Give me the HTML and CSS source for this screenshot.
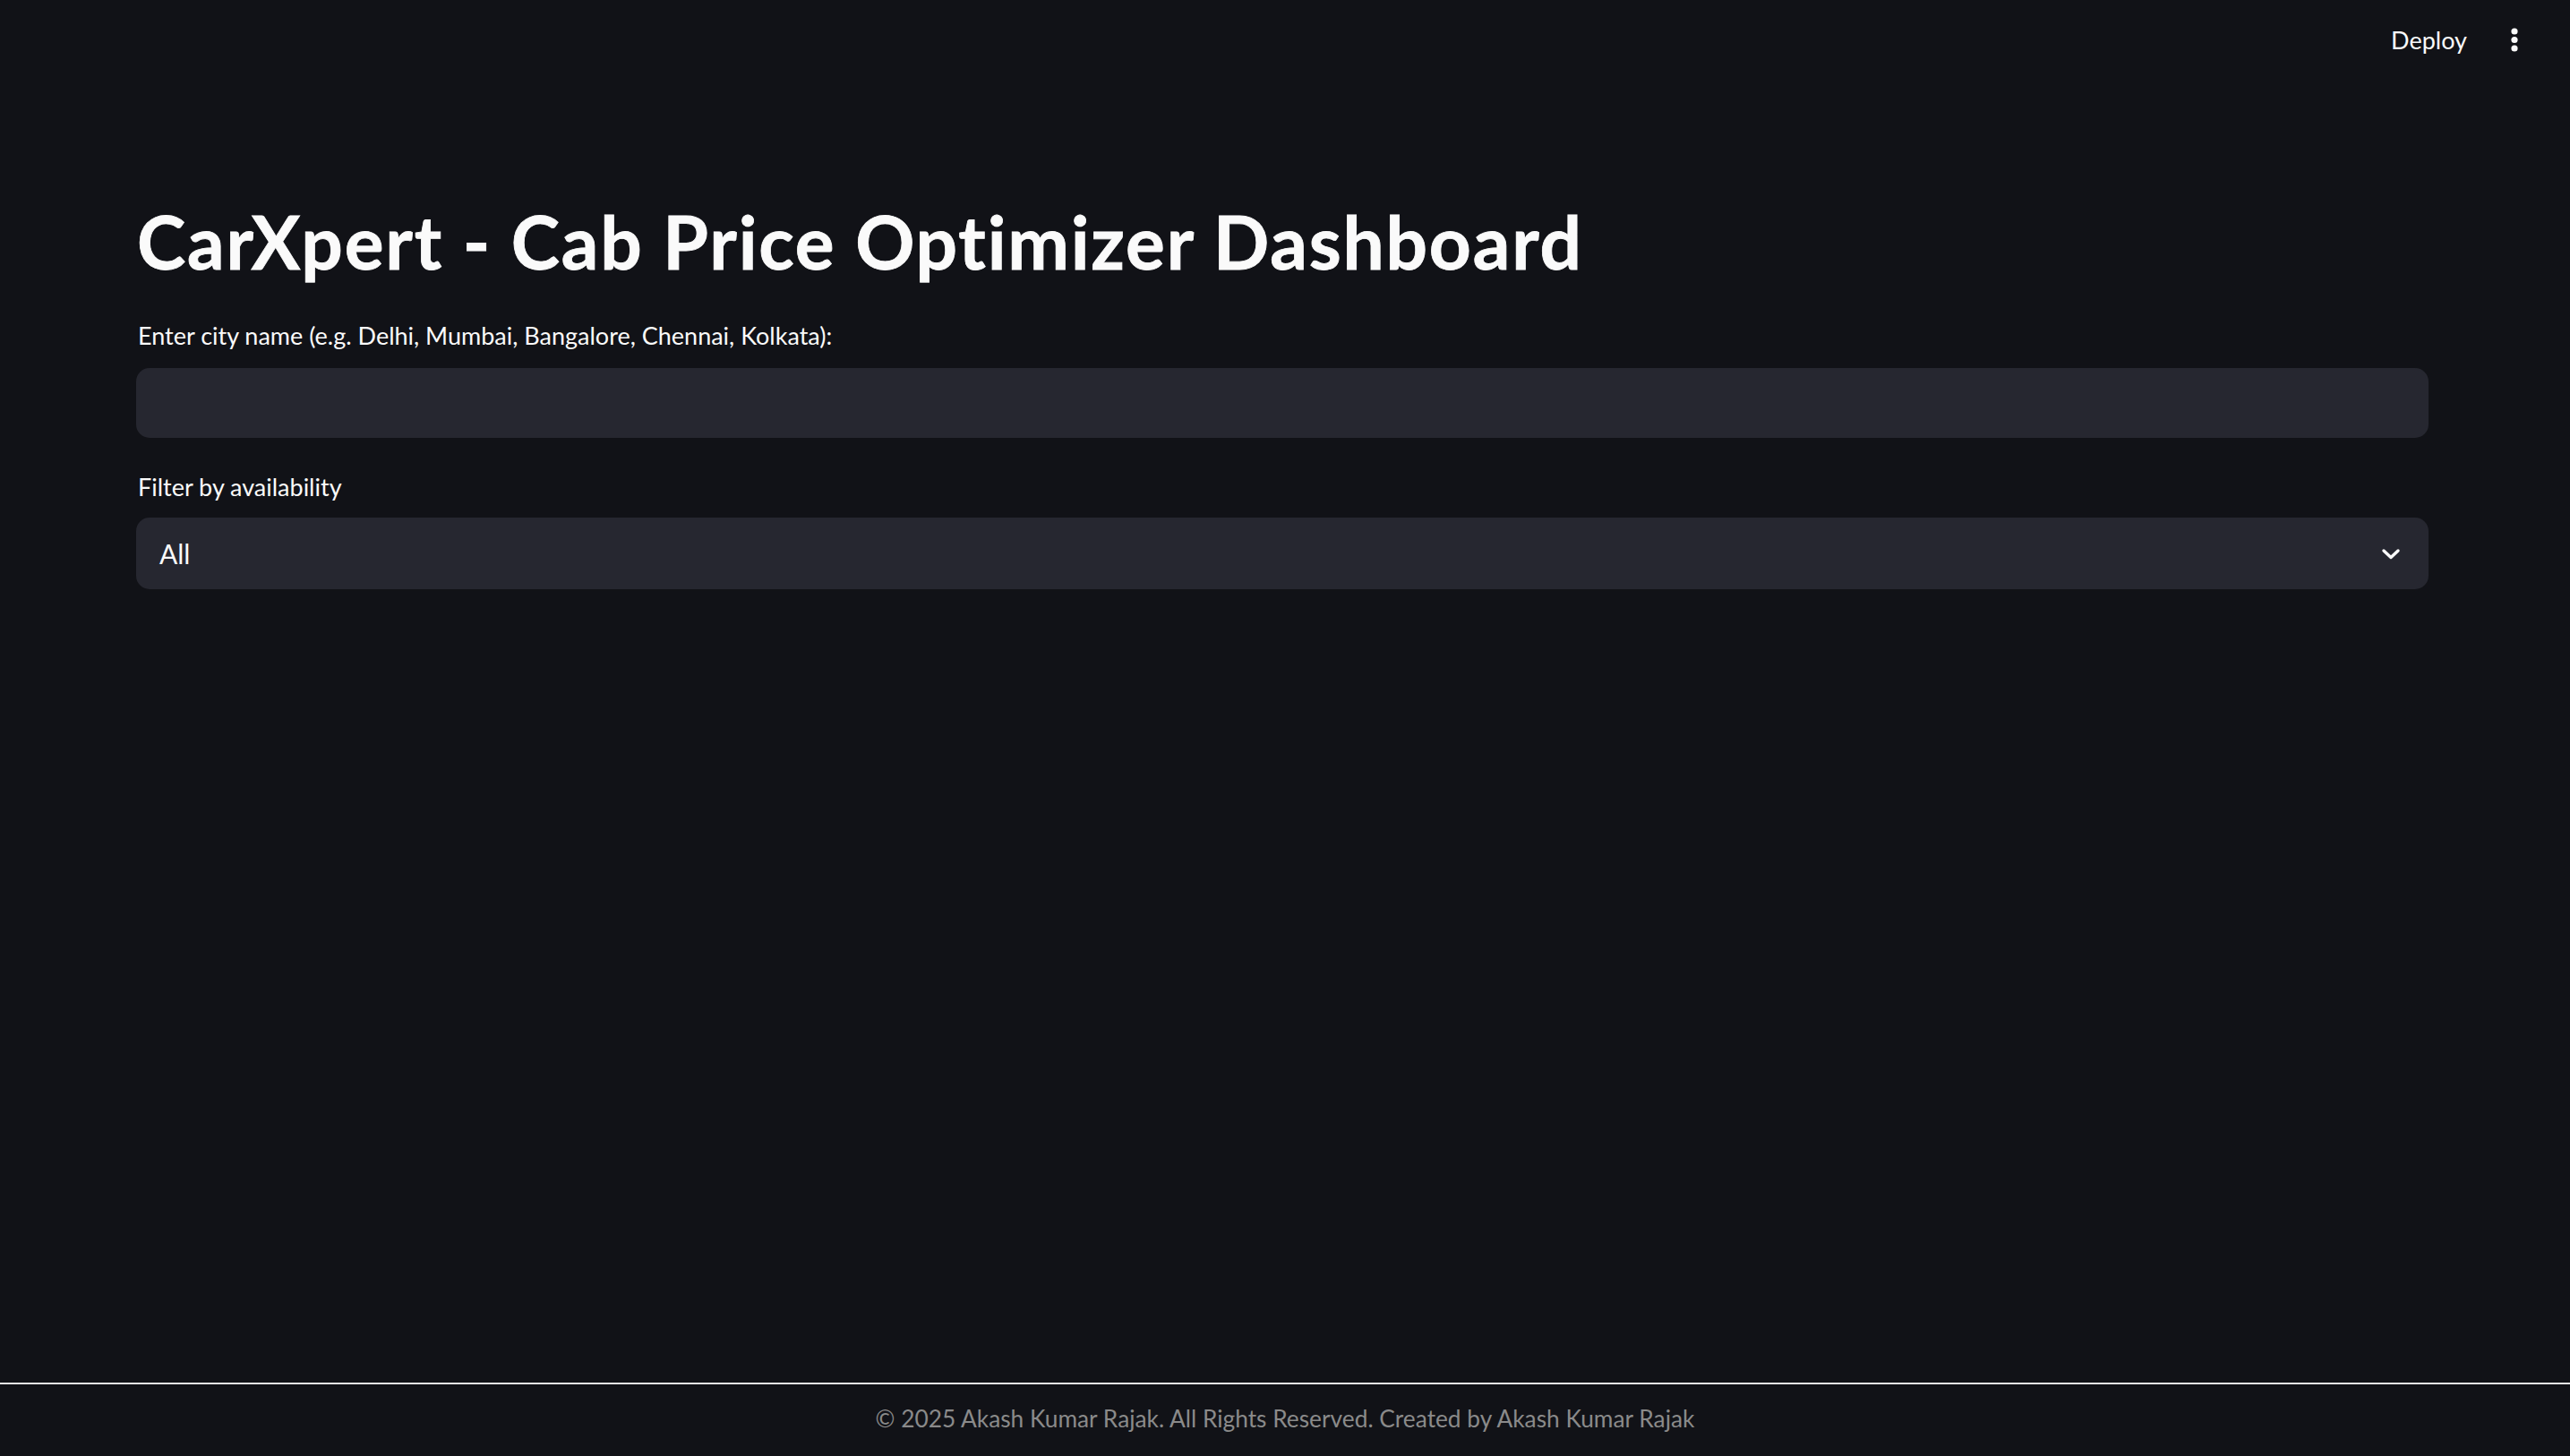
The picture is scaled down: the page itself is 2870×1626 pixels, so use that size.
FILE: index.html
```html
<!DOCTYPE html>
<html lang="en">
<head>
<meta charset="utf-8">
<title>CarXpert - Cab Price Optimizer Dashboard</title>
<link rel="stylesheet" href="styles.css">
</head>
<body>
<div class="app">
  <header class="topbar">
    <span class="deploy">Deploy</span>
    <span class="menu" aria-label="Main menu">
      <svg width="10" height="28" viewBox="0 0 10 28"><circle cx="5" cy="4" r="3.6" fill="#fafafa"/><circle cx="5" cy="13.5" r="3.6" fill="#fafafa"/><circle cx="5" cy="23" r="3.6" fill="#fafafa"/></svg>
    </span>
  </header>
  <main class="main">
    <h1 class="title">CarXpert - Cab Price Optimizer Dashboard</h1>
    <label class="field-label">Enter city name (e.g. Delhi, Mumbai, Bangalore, Chennai, Kolkata):</label>
    <div class="text-input"></div>
    <label class="field-label filter">Filter by availability</label>
    <div class="select">
      <span class="select-value">All</span>
      <svg class="chevron" width="22" height="14" viewBox="0 0 22 14"><path d="M3 3 L11 10.5 L19 3" fill="none" stroke="#fafafa" stroke-width="3.4" stroke-linecap="round" stroke-linejoin="round"/></svg>
    </div>
  </main>
  <footer class="footer">© 2025 Akash Kumar Rajak. All Rights Reserved. Created by Akash Kumar Rajak</footer>
</div>
</body>
</html>
```
FILE: styles.css
```css
html, body {
  margin: 0;
  padding: 0;
  background: #111217;
}
body {
  font-family: Lato, "Noto Sans", sans-serif;
  color: #fafafa;
}
.app {
  display: flex;
  flex-direction: column;
  min-height: 100vh;
}
.topbar {
  height: 90px;
  display: flex;
  align-items: center;
  justify-content: flex-end;
  padding-right: 57px;
  box-sizing: border-box;
}
.deploy {
  font-size: 27px;
  line-height: 1;
  color: #fafafa;
  margin-right: 48px;
  position: relative;
  top: -1px;
}
.menu {
  display: flex;
  align-items: center;
}
.main {
  flex: 1;
  padding: 0 158px 0 152px;
  display: flex;
  flex-direction: column;
}
.title {
  margin: 131px 0 0 1px;
  font-size: 82px;
  line-height: 96px;
  font-weight: 700;
  color: #fafafa;
  letter-spacing: 1.8px;
  -webkit-text-stroke: 0.8px #fafafa;
}
.field-label {
  display: block;
  margin: 38px 0 17px 2px;
  font-size: 27px;
  line-height: 39px;
  color: #fafafa;
}
.field-label.filter {
  margin-top: 35px;
  margin-bottom: 15px;
}
.text-input {
  height: 78px;
  background: #262730;
  border-radius: 15px;
}
.select {
  height: 80px;
  background: #262730;
  border-radius: 15px;
  display: flex;
  align-items: center;
  justify-content: space-between;
  padding: 0 31px 0 26px;
}
.select-value {
  font-size: 30px;
  color: #fafafa;
}
.chevron {
  display: block;
  margin-top: 2px;
}
.footer {
  border-top: 2px solid #e6e6e6;
  height: 82px;
  text-align: center;
  font-size: 26.3px;
  line-height: 40px;
  padding-top: 18px;
  box-sizing: border-box;
  color: #8a8a8a;
}
```
